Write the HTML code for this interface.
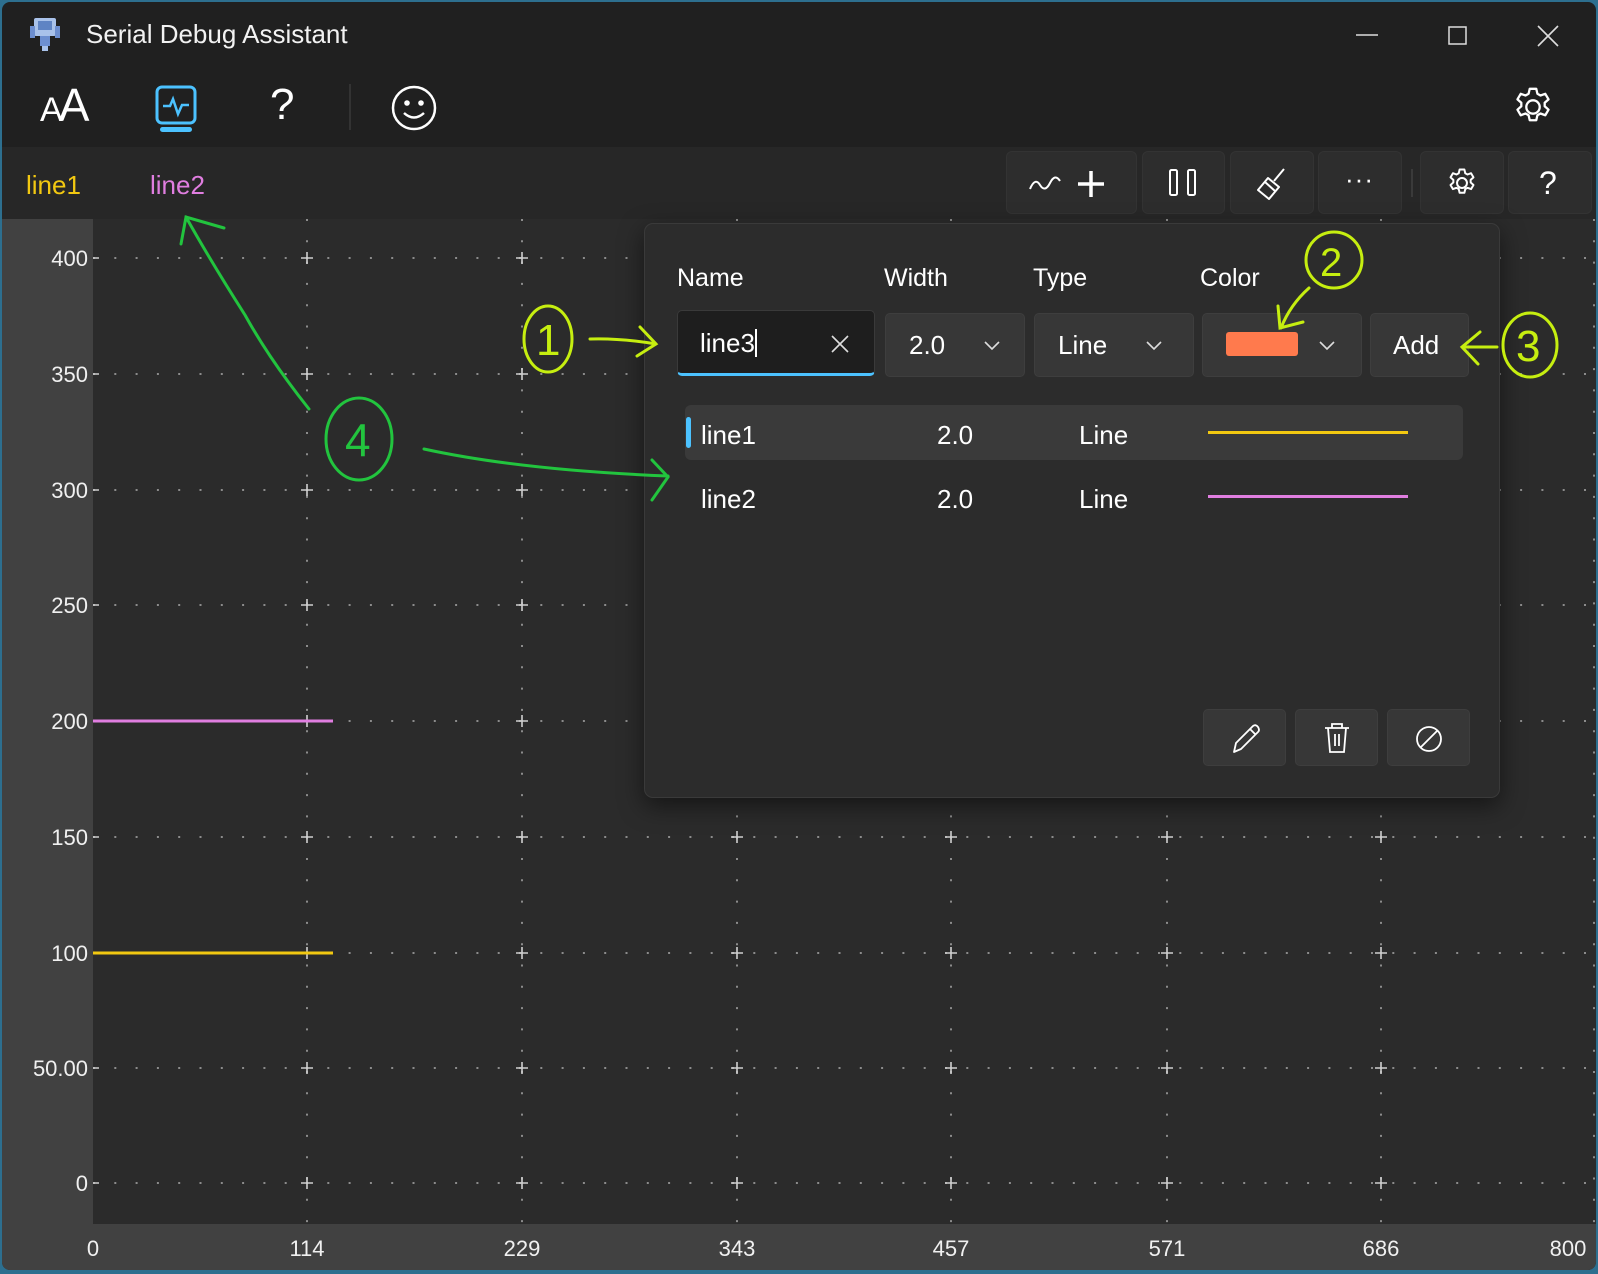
<!DOCTYPE html>
<html><head><meta charset="utf-8"><style>
*{margin:0;padding:0;box-sizing:border-box}
body{width:1598px;height:1274px;background:#2d6f8f;overflow:hidden;font-family:"Liberation Sans","DejaVu Sans",sans-serif;color:#fff;position:relative}
#win{position:absolute;left:2px;top:2px;width:1594px;height:1268px;background:#202020;border-radius:8px;overflow:hidden}
.abs{position:absolute}
.t{position:absolute;white-space:nowrap}
.btn{position:absolute;background:#2d2d2d;border-radius:6px;border:1px solid #333}
.dd{position:absolute;background:#373737;border-radius:5px;border:1px solid #3e3e3e}
</style></head><body>
<div id="win">
 <svg class="abs" style="left:26px;top:14px" width="34" height="36" viewBox="0 0 34 36">
  <rect x="6" y="2" width="22" height="18" rx="2" fill="#a9c2ea"/><rect x="10" y="5" width="14" height="9" fill="#5f84c4"/>
  <rect x="2" y="10" width="5" height="12" fill="#6d8fd0"/><rect x="27" y="10" width="5" height="12" fill="#6d8fd0"/>
  <rect x="12" y="20" width="10" height="10" fill="#6d8fd0"/><rect x="14" y="30" width="6" height="5" fill="#a9c2ea"/>
 </svg>
 <div class="t" style="left:84px;top:17px;font-size:26px;color:#f2f2f2">Serial Debug Assistant</div>
 <svg class="abs" style="left:1350px;top:20px" width="220" height="30">
  <line x1="4" y1="13" x2="26" y2="13" stroke="#ddd" stroke-width="1.5"/>
  <rect x="97" y="5" width="17" height="17" fill="none" stroke="#ddd" stroke-width="1.5"/>
  <path d="M186 4 L206 24 M206 4 L186 24" stroke="#ddd" stroke-width="1.6"/>
 </svg>
 <div class="t" style="left:38px;top:76px;font-size:46px;color:#fff;letter-spacing:-4px"><span style="font-size:34px">A</span>A</div>
 <svg class="abs" style="left:152px;top:82px" width="46" height="50">
  <rect x="3" y="3" width="38" height="36" rx="5" fill="none" stroke="#4cc2ff" stroke-width="3"/>
  <path d="M9 22 H16 L19 15 L24 30 L28 21 H35" fill="none" stroke="#4cc2ff" stroke-width="2.5"/>
  <rect x="6" y="43" width="32" height="5" rx="2.5" fill="#4cc2ff"/>
 </svg>
 <div class="t" style="left:268px;top:78px;font-size:44px;color:#fff">?</div>
 <div class="abs" style="left:347px;top:82px;width:2px;height:46px;background:#333"></div>
 <svg class="abs" style="left:388px;top:82px" width="48" height="48"><circle cx="24" cy="24" r="21" fill="none" stroke="#fff" stroke-width="2.5"/><circle cx="17" cy="19" r="2.8" fill="#fff"/><circle cx="31" cy="19" r="2.8" fill="#fff"/><path d="M14 29 Q24 38 34 29" fill="none" stroke="#fff" stroke-width="2.5"/></svg>
 <svg class="abs" style="left:1508px;top:82px" width="46" height="46" viewBox="0 0 24 24"><path d="M12 8.5a3.5 3.5 0 1 0 0 7a3.5 3.5 0 0 0 0-7zM10.3 2.5h3.4l.6 2.6 1.6.9 2.5-.9 1.7 2.9-2 1.8v1.8l2 1.8-1.7 2.9-2.5-.9-1.6.9-.6 2.6h-3.4l-.6-2.6-1.6-.9-2.5.9-1.7-2.9 2-1.8v-1.8l-2-1.8 1.7-2.9 2.5.9 1.6-.9z" fill="none" stroke="#fff" stroke-width="1.2" stroke-linejoin="round"/></svg>
 <div class="abs" style="left:0;top:145px;width:1594px;height:74px;background:#272727"></div>
 <div class="t" style="left:24px;top:168px;font-size:26px;color:#f2c811">line1</div>
 <div class="t" style="left:148px;top:168px;font-size:26px;color:#e07ee0">line2</div>
 <div class="btn" style="left:1004px;top:149px;width:131px;height:63px"></div>
 <svg class="abs" style="left:1024px;top:165px" width="100" height="34"><path d="M4 22 Q9 10 14 18 T24 16 T34 14" fill="none" stroke="#fff" stroke-width="2"/><path d="M65 4 V30 M52 17 H78" stroke="#fff" stroke-width="3.5"/></svg>
 <div class="btn" style="left:1140px;top:149px;width:83px;height:63px"></div>
 <svg class="abs" style="left:1165px;top:166px" width="34" height="30"><rect x="3" y="2" width="7" height="25" rx="1.5" fill="none" stroke="#fff" stroke-width="2"/><rect x="21" y="2" width="7" height="25" rx="1.5" fill="none" stroke="#fff" stroke-width="2"/></svg>
 <div class="btn" style="left:1228px;top:149px;width:84px;height:63px"></div>
 <svg class="abs" style="left:1252px;top:164px" width="36" height="36"><path d="M30 3 L20 15" stroke="#fff" stroke-width="2"/><path d="M14 12 L25 21 L15 33 L4 24 Z" fill="none" stroke="#fff" stroke-width="2" stroke-linejoin="round"/><path d="M11 16 L21 25" stroke="#fff" stroke-width="2"/></svg>
 <div class="btn" style="left:1316px;top:149px;width:84px;height:63px"></div>
 <div class="t" style="left:1343px;top:162px;font-size:26px;color:#fff;letter-spacing:1px">···</div>
 <div class="abs" style="left:1409px;top:167px;width:2px;height:28px;background:#3a3a3a"></div>
 <div class="btn" style="left:1418px;top:149px;width:84px;height:63px"></div>
 <svg class="abs" style="left:1443px;top:164px" width="34" height="34" viewBox="0 0 24 24"><path d="M12 8.5a3.5 3.5 0 1 0 0 7a3.5 3.5 0 0 0 0-7zM10.3 2.5h3.4l.6 2.6 1.6.9 2.5-.9 1.7 2.9-2 1.8v1.8l2 1.8-1.7 2.9-2.5-.9-1.6.9-.6 2.6h-3.4l-.6-2.6-1.6-.9-2.5.9-1.7-2.9 2-1.8v-1.8l-2-1.8 1.7-2.9 2.5.9 1.6-.9z" fill="none" stroke="#fff" stroke-width="1.4" stroke-linejoin="round"/></svg>
 <div class="btn" style="left:1506px;top:149px;width:84px;height:63px"></div>
 <div class="t" style="left:1537px;top:163px;font-size:32px;color:#fff">?</div>

 <svg class="abs" style="left:0;top:217px" width="1594" height="1051">
  <rect x="0" y="0" width="91" height="1051" fill="#414141"/>
  <rect x="0" y="1005" width="1594" height="46" fill="#414141"/>
  <rect x="91" y="0" width="1503" height="1005" fill="#2b2b2b"/>
  <g stroke="#8c8c8c" stroke-width="2" stroke-dasharray="2 19.3">
   <line x1="91" y1="39" x2="1594" y2="39"/><line x1="91" y1="155" x2="1594" y2="155"/><line x1="91" y1="271" x2="1594" y2="271"/><line x1="91" y1="386" x2="1594" y2="386"/><line x1="91" y1="502" x2="1594" y2="502"/><line x1="91" y1="618" x2="1594" y2="618"/><line x1="91" y1="734" x2="1594" y2="734"/><line x1="91" y1="849" x2="1594" y2="849"/><line x1="91" y1="964" x2="1594" y2="964"/>
   <line x1="305" y1="0" x2="305" y2="1005"/><line x1="520" y1="0" x2="520" y2="1005"/><line x1="735" y1="0" x2="735" y2="1005"/><line x1="949" y1="0" x2="949" y2="1005"/><line x1="1165" y1="0" x2="1165" y2="1005"/><line x1="1379" y1="0" x2="1379" y2="1005"/><line x1="1592" y1="0" x2="1592" y2="1005"/>
  </g>
  <g stroke="#d0d0d0" stroke-width="1.6">
   <path d="M91 39h6M91 155h6M91 271h6M91 386h6M91 502h6M91 618h6M91 734h6M91 849h6M91 964h6"/>
   <path d="M299 39h12M305 33v12 M514 39h12M520 33v12 M299 155h12M305 149v12 M514 155h12M520 149v12 M299 271h12M305 265v12 M514 271h12M520 265v12 M299 386h12M305 380v12 M514 386h12M520 380v12 M299 502h12M305 496v12 M514 502h12M520 496v12"/>
   <path d="M299 618h12M305 612v12 M514 618h12M520 612v12 M729 618h12M735 612v12 M943 618h12M949 612v12 M1159 618h12M1165 612v12 M1373 618h12M1379 612v12"/>
   <path d="M299 734h12M305 728v12 M514 734h12M520 728v12 M729 734h12M735 728v12 M943 734h12M949 728v12 M1159 734h12M1165 728v12 M1373 734h12M1379 728v12"/>
   <path d="M299 849h12M305 843v12 M514 849h12M520 843v12 M729 849h12M735 843v12 M943 849h12M949 843v12 M1159 849h12M1165 843v12 M1373 849h12M1379 843v12"/>
   <path d="M299 964h12M305 958v12 M514 964h12M520 958v12 M729 964h12M735 958v12 M943 964h12M949 958v12 M1159 964h12M1165 958v12 M1373 964h12M1379 958v12"/>
  </g>
  <line x1="91" y1="502" x2="331" y2="502" stroke="#e07ee0" stroke-width="3"/>
  <line x1="91" y1="734" x2="331" y2="734" stroke="#f2c811" stroke-width="3"/>
  <g font-size="22" fill="#f0f0f0" text-anchor="end" font-family="Liberation Sans">
   <text x="86" y="47">400</text><text x="86" y="163">350</text><text x="86" y="279">300</text><text x="86" y="394">250</text><text x="86" y="510">200</text><text x="86" y="626">150</text><text x="86" y="742">100</text><text x="86" y="857">50.00</text><text x="86" y="972">0</text>
  </g>
  <g font-size="22" fill="#f0f0f0" text-anchor="middle" font-family="Liberation Sans">
   <text x="91" y="1037">0</text><text x="305" y="1037">114</text><text x="520" y="1037">229</text><text x="735" y="1037">343</text><text x="949" y="1037">457</text><text x="1165" y="1037">571</text><text x="1379" y="1037">686</text><text x="1566" y="1037">800</text>
  </g>
 </svg>

 <div class="abs" style="left:642px;top:221px;width:856px;height:575px;background:#2c2c2c;border:1px solid #3a3a3a;border-radius:9px;box-shadow:0 8px 24px rgba(0,0,0,.5)"></div>
 <div class="t" style="left:675px;top:262px;font-size:25px;color:#fff">Name</div>
 <div class="t" style="left:882px;top:262px;font-size:25px;color:#fff">Width</div>
 <div class="t" style="left:1031px;top:262px;font-size:25px;color:#fff">Type</div>
 <div class="t" style="left:1198px;top:262px;font-size:25px;color:#fff">Color</div>
 <div class="abs" style="left:675px;top:308px;width:198px;height:66px;background:#1e1e1e;border:1px solid #3a3a3a;border-radius:5px;border-bottom:3px solid #4cc2ff"></div>
 <div class="t" style="left:698px;top:326px;font-size:26px;color:#fff">line3<span style="display:inline-block;width:2px;height:28px;background:#fff;vertical-align:-5px"></span></div>
 <svg class="abs" style="left:828px;top:332px" width="20" height="20"><path d="M2 2L18 18M18 2L2 18" stroke="#ddd" stroke-width="1.6"/></svg>
 <div class="dd" style="left:883px;top:311px;width:140px;height:64px"></div>
 <div class="t" style="left:907px;top:328px;font-size:26px">2.0</div>
 <div class="dd" style="left:1032px;top:311px;width:160px;height:64px"></div>
 <div class="t" style="left:1056px;top:328px;font-size:26px">Line</div>
 <div class="dd" style="left:1200px;top:311px;width:160px;height:64px"></div>
 <div class="abs" style="left:1224px;top:330px;width:72px;height:24px;background:#ff7a4d;border-radius:3px"></div>
 <svg class="abs" style="left:975px;top:337px" width="400" height="14"><path d="M8 3l7 7 7-7M170 3l7 7 7-7M343 3l7 7 7-7" fill="none" stroke="#ddd" stroke-width="1.6"/></svg>
 <div class="dd" style="left:1368px;top:311px;width:99px;height:64px"></div>
 <div class="t" style="left:1391px;top:328px;font-size:26px">Add</div>
 <div class="abs" style="left:683px;top:403px;width:778px;height:55px;background:#3a3a3a;border-radius:6px"></div>
 <div class="abs" style="left:684px;top:415px;width:5px;height:31px;background:#4cc2ff;border-radius:3px"></div>
 <div class="t" style="left:699px;top:418px;font-size:26px">line1</div>
 <div class="t" style="left:935px;top:418px;font-size:26px">2.0</div>
 <div class="t" style="left:1077px;top:418px;font-size:26px">Line</div>
 <div class="abs" style="left:1206px;top:429px;width:200px;height:3px;background:#f2c811"></div>
 <div class="t" style="left:699px;top:482px;font-size:26px">line2</div>
 <div class="t" style="left:935px;top:482px;font-size:26px">2.0</div>
 <div class="t" style="left:1077px;top:482px;font-size:26px">Line</div>
 <div class="abs" style="left:1206px;top:493px;width:200px;height:3px;background:#e07ee0"></div>
 <div class="dd" style="left:1201px;top:707px;width:83px;height:57px"></div>
 <div class="dd" style="left:1293px;top:707px;width:83px;height:57px"></div>
 <div class="dd" style="left:1385px;top:707px;width:83px;height:57px"></div>
 <svg class="abs" style="left:1226px;top:719px" width="36" height="36"><path d="M6 31 L8 22 L25 5 Q28 3 30 6 Q32 9 30 11 L13 28 Z M22 8 L27 13" fill="none" stroke="#fff" stroke-width="1.8" stroke-linejoin="round"/></svg>
 <svg class="abs" style="left:1318px;top:718px" width="34" height="36"><path d="M5 8 H29 M12 8 V4 H22 V8 M8 8 L10 32 H24 L26 8 M15 14 V26 M19 14 V26" fill="none" stroke="#fff" stroke-width="1.8"/></svg>
 <svg class="abs" style="left:1411px;top:721px" width="32" height="32"><circle cx="16" cy="16" r="12" fill="none" stroke="#fff" stroke-width="1.8"/><path d="M8 24 L24 8" stroke="#fff" stroke-width="1.8"/></svg>
</div>

<svg class="abs" style="left:0;top:0" width="1598" height="1274">
 <g fill="none" stroke="#c6ee10" stroke-width="3" stroke-linecap="round">
  <ellipse cx="548" cy="339" rx="24" ry="33"/>
  <path d="M590 339 Q620 338 656 344 M640 327 L656 344 L637 356"/>
  <circle cx="1334" cy="260" r="28"/>
  <path d="M1309 288 Q1290 305 1281 328 M1278 306 L1280 328 L1303 322"/>
  <ellipse cx="1530" cy="345" rx="27" ry="32"/>
  <path d="M1497 347 L1463 347 M1480 332 L1462 347 L1478 364"/>
 </g>
 <g fill="none" stroke="#22c43e" stroke-width="3" stroke-linecap="round">
  <ellipse cx="359" cy="439" rx="33" ry="41"/>
  <path d="M309 409 Q270 360 245 315 Q210 260 186 217 M181 244 L186 217 L224 228"/>
  <path d="M424 449 Q520 470 668 476 M652 460 L668 477 L652 500"/>
 </g>
 <g font-family="Liberation Sans" font-size="44">
  <text x="536" y="355" fill="#c6ee10">1</text>
  <text x="1320" y="276" fill="#c6ee10" font-size="40">2</text>
  <text x="1516" y="361" fill="#c6ee10">3</text>
  <text x="345" y="456" fill="#22c43e" font-size="46">4</text>
 </g>
</svg>
</body></html>
